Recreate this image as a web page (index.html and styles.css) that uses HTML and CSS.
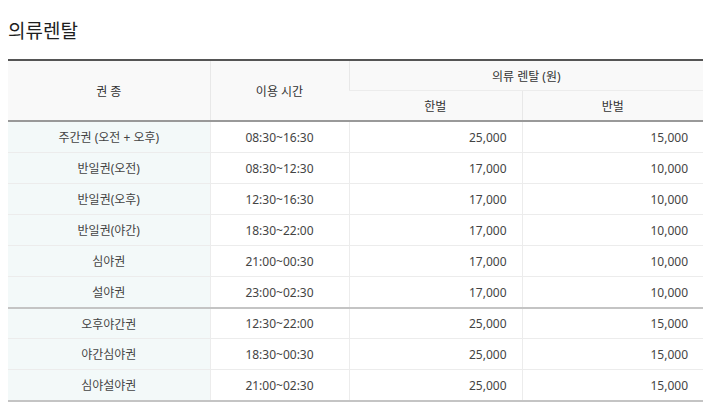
FILE: index.html
```html
<!DOCTYPE html>
<html lang="ko">
<head>
<meta charset="utf-8">
<link rel="stylesheet" href="styles.css">
</head>
<body>
<div class="page">
  <h2 class="title">의류렌탈</h2>
  <table class="rental">
    <colgroup>
      <col class="c1"><col class="c2"><col class="c3"><col class="c4">
    </colgroup>
    <thead>
      <tr>
        <th rowspan="2">권 종</th>
        <th rowspan="2">이용 시간</th>
        <th colspan="2">의류 렌탈 (원)</th>
      </tr>
      <tr>
        <th>한벌</th>
        <th>반벌</th>
      </tr>
    </thead>
    <tbody>
      <tr><td class="kind">주간권 (오전 + 오후)</td><td class="time">08:30~16:30</td><td class="num">25,000</td><td class="num">15,000</td></tr>
      <tr><td class="kind">반일권(오전)</td><td class="time">08:30~12:30</td><td class="num">17,000</td><td class="num">10,000</td></tr>
      <tr><td class="kind">반일권(오후)</td><td class="time">12:30~16:30</td><td class="num">17,000</td><td class="num">10,000</td></tr>
      <tr><td class="kind">반일권(야간)</td><td class="time">18:30~22:00</td><td class="num">17,000</td><td class="num">10,000</td></tr>
      <tr><td class="kind">심야권</td><td class="time">21:00~00:30</td><td class="num">17,000</td><td class="num">10,000</td></tr>
      <tr><td class="kind">설야권</td><td class="time">23:00~02:30</td><td class="num">17,000</td><td class="num">10,000</td></tr>
      <tr class="group"><td class="kind">오후야간권</td><td class="time">12:30~22:00</td><td class="num">25,000</td><td class="num">15,000</td></tr>
      <tr><td class="kind">야간심야권</td><td class="time">18:30~00:30</td><td class="num">25,000</td><td class="num">15,000</td></tr>
      <tr><td class="kind">심야설야권</td><td class="time">21:00~02:30</td><td class="num">25,000</td><td class="num">15,000</td></tr>
    </tbody>
  </table>
</div>
</body>
</html>
```
FILE: styles.css
```css
html, body {
  margin: 0;
  padding: 0;
  background: #fff;
}
.page {
  padding: 0 17px 0 8px;
  font-family: "Noto Sans", "Noto Sans CJK KR", sans-serif;
  color: #444;
}
.title {
  margin: 0;
  padding-top: 18px;
  height: 59px;
  box-sizing: border-box;
  font-size: 19px;
  line-height: 26px;
  font-weight: 400;
  color: #1e1e1e;
}
.rental {
  width: 695px;
  border-collapse: collapse;
  table-layout: fixed;
  font-size: 12px;
  border-top: 2px solid #555;
  border-bottom: 2px solid #c4c4c4;
}
.c1 { width: 202px; }
.c2 { width: 139px; }
.c3 { width: 173px; }
.c4 { width: 181px; }
.rental th {
  background: #f9f9f9;
  font-weight: 400;
  color: #333;
  height: 29px;
  padding: 0;
  border-left: 1px solid #e8e8e8;
  border-bottom: 1px solid #ececec;
}
.rental th:first-child { border-left: 0; }
.rental thead tr:last-child th { border-bottom: 2px solid #999; }
.rental thead tr:first-child th[rowspan] { border-bottom: 2px solid #999; }
.rental td {
  height: 30px;
  padding: 0;
  border-left: 1px solid #ececec;
  border-bottom: 1px solid #ececec;
  color: #444;
}
.rental td:first-child { border-left: 0; }
.kind {
  background: #f3f9f9;
  text-align: center;
}
.time { text-align: center; }
.num {
  text-align: right;
  padding-right: 15px !important;
}
.rental tr.group td {
  border-top: 2px solid #c4c4c4;
  height: 29px;
}
```
